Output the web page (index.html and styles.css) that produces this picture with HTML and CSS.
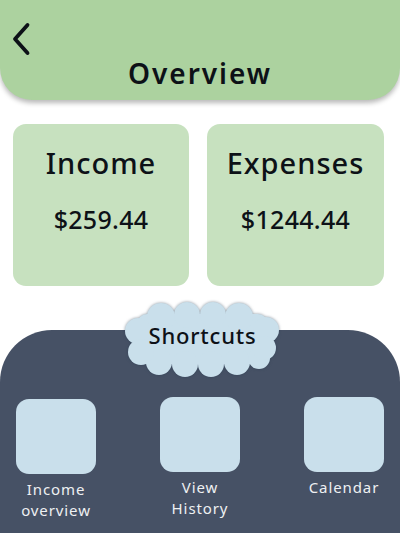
FILE: index.html
```html
<!DOCTYPE html>
<html>
<head>
<meta charset="utf-8">
<link rel="stylesheet" href="styles.css">
</head>
<body>
<div class="page">
  <header class="header">
    <div class="back">
      <svg width="24" height="34" viewBox="0 0 24 34"><path d="M17.5 3 L5 17 L17.5 31" fill="none" stroke="#0d1117" stroke-width="3.8" stroke-linecap="round" stroke-linejoin="round"/></svg>
    </div>
    <h1 class="title">Overview</h1>
  </header>
  <section class="cards">
    <div class="card">
      <div class="card-title">Income</div>
      <div class="card-amount">$259.44</div>
    </div>
    <div class="card">
      <div class="card-title">Expenses</div>
      <div class="card-amount">$1244.44</div>
    </div>
  </section>
  <section class="panel">
    <div class="cloud">
      <svg class="cloud-shape" width="159" height="78" viewBox="0 0 159 78">
        <g fill="#c9dfeb">
          <rect x="14" y="14" width="131" height="50" rx="10"/>
          <circle cx="38" cy="17" r="14"/>
          <circle cx="64" cy="15" r="13"/>
          <circle cx="90" cy="15" r="13"/>
          <circle cx="116" cy="17" r="14"/>
          <circle cx="36" cy="62" r="13"/>
          <circle cx="62" cy="64" r="13"/>
          <circle cx="88" cy="64" r="13"/>
          <circle cx="114" cy="62" r="13"/>
          <circle cx="136" cy="58" r="11"/>
          <circle cx="15" cy="31" r="13"/>
          <circle cx="18" cy="52" r="13"/>
          <circle cx="143" cy="30" r="13"/>
          <circle cx="141" cy="48" r="12"/>
        </g>
      </svg>
      <span class="cloud-text">Shortcuts</span>
    </div>
    <div class="shortcuts">
      <div class="shortcut shortcut-low">
        <div class="tile"></div>
        <div class="label">Income<br>overview</div>
      </div>
      <div class="shortcut">
        <div class="tile"></div>
        <div class="label">View<br>History</div>
      </div>
      <div class="shortcut">
        <div class="tile"></div>
        <div class="label">Calendar</div>
      </div>
    </div>
  </section>
</div>
</body>
</html>
```
FILE: styles.css
```css
* { box-sizing: border-box; }
html, body { margin: 0; padding: 0; background: #ffffff; }
body {
  font-family: "Noto Sans", "Open Sans", sans-serif;
  color: #0d1117;
  width: 400px;
  height: 533px;
  overflow: hidden;
}
.page { width: 400px; height: 533px; display: flex; flex-direction: column; }

.header {
  height: 100px;
  background: #acd29f;
  border-radius: 0 0 32px 32px;
  box-shadow: 0 3px 5px rgba(0,0,0,0.28);
  padding-top: 22px;
  display: flex;
  flex-direction: column;
  position: relative;
  z-index: 1;
}
.back { height: 34px; padding-left: 10px; }
.back svg { display: block; }
.title {
  margin: 0;
  text-align: center;
  font-size: 28px;
  line-height: 34px;
  font-weight: 600;
  letter-spacing: 2px;
}

.cards {
  display: grid;
  grid-template-columns: 176px 177px;
  gap: 18px;
  padding: 0 16px 0 13px;
  margin-top: 24px;
}
.card {
  height: 162px;
  background: #c7e1bf;
  border-radius: 13px;
  padding-top: 22px;
  text-align: center;
}
.card-title { font-size: 29px; line-height: 34px; font-weight: 500; letter-spacing: 1px; }
.card-amount { font-size: 25px; line-height: 30px; margin-top: 24px; font-weight: 500; letter-spacing: 0.3px; }

.panel {
  margin-top: 44px;
  flex: 1;
  background: #465165;
  border-radius: 52px 52px 0 0;
  position: relative;
}
.cloud {
  position: absolute;
  left: 123px;
  top: -30px;
  width: 159px;
  height: 78px;
  display: flex;
  align-items: center;
  justify-content: center;
}
.cloud-shape {
  position: absolute;
  left: 0; top: 0;
  filter: drop-shadow(0 0 1.5px rgba(40,60,80,0.55));
}
.cloud-text {
  position: relative;
  font-size: 22px;
  font-weight: 500;
  color: #0d1117;
  margin-top: -8px;
  letter-spacing: 0.8px;
}

.shortcuts {
  display: flex;
  justify-content: space-between;
  padding: 67px 16px 0 16px;
}
.shortcut { width: 80px; display: flex; flex-direction: column; align-items: center; }
.shortcut-low { padding-top: 2px; }
.tile { width: 80px; height: 75px; background: #c9dfeb; border-radius: 13px; }
.label {
  margin-top: 5px;
  color: #eef0f2;
  font-size: 15px;
  line-height: 21px;
  text-align: center;
  white-space: nowrap;
  letter-spacing: 0.9px;
}
```
